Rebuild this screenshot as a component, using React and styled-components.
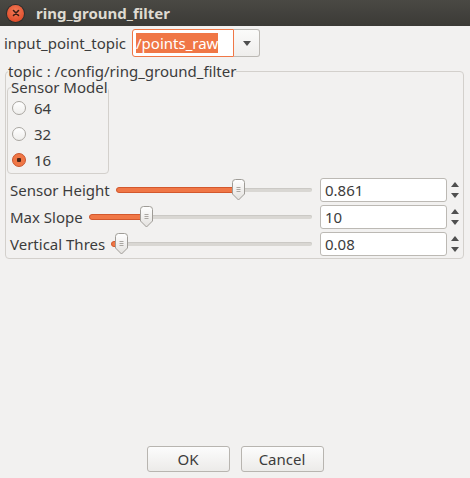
import React from 'react';
import styled, { createGlobalStyle } from 'styled-components';

const GlobalStyle = createGlobalStyle`
  html, body { margin: 0; padding: 0; height: 100%; }
  body {
    background: #f2f1f0;
    font-family: "Noto Sans", "DejaVu Sans", sans-serif;
    font-size: 15px;
    color: #3c3c3c;
  }
  #root { height: 100%; }
`;

const Window = styled.div`
  display: flex;
  flex-direction: column;
  height: 100%;
`;

const TitleBar = styled.div`
  flex: none;
  height: 26px;
  display: flex;
  align-items: center;
  gap: 12px;
  padding-left: 7px;
  background: linear-gradient(#4a4944, #3b3a36);
`;

const CloseButton = styled.div`
  width: 17px;
  height: 17px;
  border-radius: 50%;
  background: radial-gradient(circle at 50% 35%, #f17b57, #e2512f 70%, #c9421f);
  box-shadow: 0 0 0 1px #2e2d2a;
  display: flex;
  align-items: center;
  justify-content: center;
`;

const Title = styled.div`
  color: #dfdbd2;
  font-weight: bold;
  font-size: 15px;
`;

const TopicRow = styled.div`
  display: flex;
  align-items: center;
  height: 28px;
  margin-top: 3px;
  padding-left: 4px;
  gap: 6px;
`;

const Combo = styled.div`
  display: flex;
  height: 28px;
`;

const ComboField = styled.div`
  width: 102px;
  box-sizing: border-box;
  border: 1px solid #f07746;
  border-radius: 3px 0 0 3px;
  background: #fff;
  display: flex;
  align-items: center;
  padding-left: 3px;
`;

const Selected = styled.span`
  background: #f07746;
  color: #fff;
  line-height: 20px;
`;

const ComboButton = styled.div`
  width: 26px;
  box-sizing: border-box;
  border: 1px solid #bcb9b4;
  border-left: none;
  border-radius: 0 3px 3px 0;
  background: linear-gradient(#fbfbfa, #efeeec);
  display: flex;
  align-items: center;
  justify-content: center;
`;

const GroupBox = styled.fieldset`
  margin: ${p => p.$outer ? '6px 6px 0 5px' : '0 0 4px 0'};
  padding: ${p => p.$outer ? '0 0 2px 1px' : '0'};
  border: 1px solid #d3d0cc;
  border-radius: 4px;
  min-width: 0;
  ${p => !p.$outer && 'width: 102px; box-sizing: border-box;'}
`;

const Legend = styled.legend`
  padding: 0;
  margin-left: ${p => p.$outer ? '1px' : '3px'};
  line-height: 16px;
`;

const RadioRow = styled.label`
  display: flex;
  align-items: center;
  height: 26px;
  padding-left: 4px;
  gap: 8px;
`;

const RadioDot = styled.span`
  width: 14px;
  height: 14px;
  box-sizing: border-box;
  border-radius: 50%;
  border: 1px solid ${p => p.$checked ? '#c9542c' : '#a9a6a1'};
  background: ${p => p.$checked
    ? 'radial-gradient(circle, #4a2618 0 2px, #f07746 2.5px)'
    : 'linear-gradient(#ffffff, #efeeec)'};
`;

const SliderRow = styled.div`
  display: flex;
  align-items: center;
  height: 24px;
  margin-top: 3px;
  padding-left: 3px;
`;

const SliderTrack = styled.div`
  position: relative;
  flex: 1;
  height: 21px;
  margin: 0 8px 0 6px;
`;

const Groove = styled.div`
  position: absolute;
  left: 0;
  right: 0;
  top: 8px;
  height: 4px;
  border-radius: 2px;
  background: #d9d7d3;
  box-shadow: inset 0 1px 0 #cbc9c5;
`;

const Fill = styled.div`
  position: absolute;
  left: 0;
  top: 7px;
  height: 6px;
  box-sizing: border-box;
  border-radius: 3px;
  background: #f07746;
  border: 1px solid #d3582d;
`;

const HandleWrap = styled.div`
  position: absolute;
  top: -1px;
  width: 13px;
  height: 22px;
`;

const SpinBox = styled.div`
  width: 127px;
  height: 24px;
  box-sizing: border-box;
  border: 1px solid #bcb9b4;
  border-radius: 3px;
  background: #fff;
  display: flex;
  align-items: center;
  padding-left: 4px;
`;

const SpinArrows = styled.div`
  width: 16px;
  display: flex;
  flex-direction: column;
  align-items: center;
  gap: 6px;
`;

const Spacer = styled.div`flex: 1;`;

const ButtonRow = styled.div`
  display: flex;
  justify-content: center;
  gap: 11px;
  padding-bottom: 6px;
`;

const Button = styled.button`
  width: 83px;
  height: 26px;
  border: 1px solid #b8b5b0;
  border-radius: 3px;
  background: linear-gradient(#fcfcfc, #ecebe9);
  font-family: inherit;
  font-size: 15px;
  color: #3c3c3c;
  padding: 0;
`;

const Handle = () => (
  <svg width="13" height="22" viewBox="0 0 13 22">
    <defs>
      <linearGradient id="hg" x1="0" y1="0" x2="0" y2="1">
        <stop offset="0" stopColor="#ffffff" />
        <stop offset="1" stopColor="#e3e1de" />
      </linearGradient>
    </defs>
    <path d="M0.5 3.5 Q0.5 0.5 3.5 0.5 H9.5 Q12.5 0.5 12.5 3.5 V15 L6.5 21 L0.5 15 Z" fill="url(#hg)" stroke="#9f9c97" />
    <path d="M4.5 8.5 H8.5 M4.5 10.5 H8.5 M4.5 12.5 H8.5" stroke="#aaa7a2" strokeWidth="1" />
  </svg>
);

const Tri = ({ up }) => (
  <svg width="8" height="5" viewBox="0 0 8 5">
    <path d={up ? 'M0 5 L4 0 L8 5 Z' : 'M0 0 L8 0 L4 5 Z'} fill="#4f4f4f" />
  </svg>
);

const sliders = [
  { label: 'Sensor Height', f: 0.636, value: '0.861' },
  { label: 'Max Slope', f: 0.245, value: '10' },
  { label: 'Vertical Thres', f: 0.02, value: '0.08' },
];

const Slider = ({ f }) => (
  <SliderTrack>
    <Groove />
    <Fill style={{ width: `calc(${f} * (100% - 13px) + 7px)` }} />
    <HandleWrap style={{ left: `calc(${f} * (100% - 13px))` }}>
      <Handle />
    </HandleWrap>
  </SliderTrack>
);

export default function App() {
  return (
    <Window>
      <GlobalStyle />
      <TitleBar>
        <CloseButton>
          <svg width="8" height="8" viewBox="0 0 8 8">
            <path d="M1.5 1.5 L6.5 6.5 M6.5 1.5 L1.5 6.5" stroke="#3a1d14" strokeWidth="1.6" strokeLinecap="round" />
          </svg>
        </CloseButton>
        <Title>ring_ground_filter</Title>
      </TitleBar>
      <TopicRow>
        <span>input_point_topic</span>
        <Combo>
          <ComboField><Selected>/points_raw</Selected></ComboField>
          <ComboButton><Tri /></ComboButton>
        </Combo>
      </TopicRow>
      <GroupBox $outer>
        <Legend $outer>topic : /config/ring_ground_filter</Legend>
        <GroupBox>
          <Legend>Sensor Model</Legend>
          <RadioRow><RadioDot />64</RadioRow>
          <RadioRow><RadioDot />32</RadioRow>
          <RadioRow><RadioDot $checked />16</RadioRow>
        </GroupBox>
        {sliders.map(s => (
          <SliderRow key={s.label}>
            <span>{s.label}</span>
            <Slider f={s.f} />
            <SpinBox>{s.value}</SpinBox>
            <SpinArrows><Tri up /><Tri /></SpinArrows>
          </SliderRow>
        ))}
      </GroupBox>
      <Spacer />
      <ButtonRow>
        <Button>OK</Button>
        <Button>Cancel</Button>
      </ButtonRow>
    </Window>
  );
}
